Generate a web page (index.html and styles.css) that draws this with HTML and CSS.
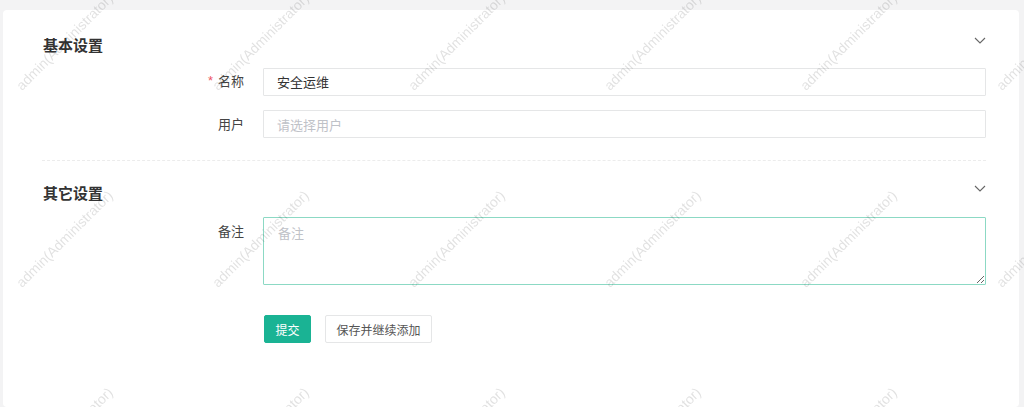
FILE: index.html
```html
<!DOCTYPE html>
<html lang="zh-CN">
<head>
<meta charset="utf-8">
<title>表单</title>
<link rel="stylesheet" href="styles.css">
</head>
<body>
<div class="page">
  <div class="card">
    <section class="group">
      <div class="group-head">
        <h3 class="group-title">基本设置</h3>
        <svg class="chev" width="12" height="7" viewBox="0 0 12 7"><path d="M1 1 L6 6 L11 1" fill="none" stroke="#666" stroke-width="1.1"/></svg>
      </div>
      <div class="form-row">
        <label class="form-label"><span class="req">*</span>名称</label>
        <input class="input" type="text" value="安全运维">
      </div>
      <div class="form-row">
        <label class="form-label">用户</label>
        <input class="input" type="text" placeholder="请选择用户">
      </div>
    </section>
    <section class="group group-second">
      <div class="group-head">
        <h3 class="group-title">其它设置</h3>
        <svg class="chev" width="12" height="7" viewBox="0 0 12 7"><path d="M1 1 L6 6 L11 1" fill="none" stroke="#666" stroke-width="1.1"/></svg>
      </div>
      <div class="form-row form-row-top">
        <label class="form-label">备注</label>
        <textarea class="textarea" placeholder="备注"></textarea>
      </div>
      <div class="form-actions">
        <button class="btn btn-primary" type="button">提交</button>
        <button class="btn btn-default" type="button">保存并继续添加</button>
      </div>
    </section>
  </div>
  <div class="watermark">
    <span>admin(Administrator)</span><span>admin(Administrator)</span><span>admin(Administrator)</span><span>admin(Administrator)</span><span>admin(Administrator)</span><span>admin(Administrator)</span>
    <span>admin(Administrator)</span><span>admin(Administrator)</span><span>admin(Administrator)</span><span>admin(Administrator)</span><span>admin(Administrator)</span><span>admin(Administrator)</span>
    <span>admin(Administrator)</span><span>admin(Administrator)</span><span>admin(Administrator)</span><span>admin(Administrator)</span><span>admin(Administrator)</span><span>admin(Administrator)</span>
  </div>
</div>
</body>
</html>
```

FILE: styles.css
```css
* { box-sizing: border-box; }

html, body {
  margin: 0;
  height: 100%;
  overflow: hidden;
}

body {
  background: #f3f3f4;
  font-family: "Noto Sans CJK SC", "Liberation Sans", sans-serif;
  color: #333;
  font-size: 13px;
}

.page {
  padding: 10px 5px 0 3px;
}

.card {
  background: #fff;
  border-radius: 4px;
  min-height: 397px;
  padding: 24px 33px 20px 39px;
}

.group {
  padding-bottom: 22px;
}

.group-second {
  border-top: 1px dashed #ececec;
  padding-top: 21px;
}

.group-head {
  display: flex;
  justify-content: space-between;
  align-items: flex-start;
  height: 22px;
  margin-bottom: 11px;
}

.group-second .group-head {
  margin-bottom: 13px;
}

.group-title {
  margin: 0 0 0 1px;
  font-size: 15px;
  line-height: 22px;
  font-weight: 700;
  color: #333;
}

.chev {
  margin-top: 3px;
  display: block;
}

.form-row {
  display: flex;
  align-items: center;
  margin-bottom: 14px;
}

.form-row:last-child {
  margin-bottom: 0;
}

.form-row-top {
  align-items: flex-start;
  margin-bottom: 0;
}

.form-label {
  width: 202px;
  flex: none;
  margin-right: 19px;
  text-align: right;
  line-height: 28px;
  font-size: 13px;
  color: #444;
}

.req {
  color: #ed5565;
  font-family: "Liberation Sans", sans-serif;
  margin-right: 5px;
  position: relative;
  top: -1px;
}

.input {
  flex: 1;
  min-width: 0;
  height: 28px;
  border: 1px solid #e5e6e7;
  border-radius: 1px;
  padding: 0 13px;
  font-family: inherit;
  font-size: 13px;
  color: #333;
  outline: none;
  background: #fff;
}

.input::placeholder,
.textarea::placeholder {
  color: #bfc2c8;
}

.textarea {
  flex: 1;
  min-width: 0;
  height: 68px;
  border: 1px solid #8cd9c4;
  border-radius: 1px;
  padding: 5px 14px;
  font-family: inherit;
  font-size: 13px;
  line-height: 20px;
  color: #333;
  outline: none;
  resize: both;
  display: block;
}

.form-actions {
  display: flex;
  gap: 14px;
  margin-left: 222px;
  margin-top: 30px;
}

.btn {
  height: 28px;
  padding: 0 10.5px;
  font-family: inherit;
  font-size: 12px;
  border-radius: 2px;
  cursor: pointer;
}

.btn-primary {
  background: #1ab394;
  border: 1px solid #1ab394;
  color: #fff;
}

.btn-default {
  background: #fff;
  border: 1px solid #e5e6e7;
  color: #555;
}

.watermark {
  position: fixed;
  left: -34px;
  top: -57px;
  display: grid;
  grid-template-columns: repeat(6, 196px);
  grid-auto-rows: 197px;
  pointer-events: none;
  z-index: 10;
}

.watermark span {
  display: flex;
  align-items: center;
  justify-content: center;
  white-space: nowrap;
  font-family: "Liberation Sans", sans-serif;
  font-size: 14px;
  color: rgba(0, 0, 0, 0.12);
  transform: rotate(-45deg);
}
```
